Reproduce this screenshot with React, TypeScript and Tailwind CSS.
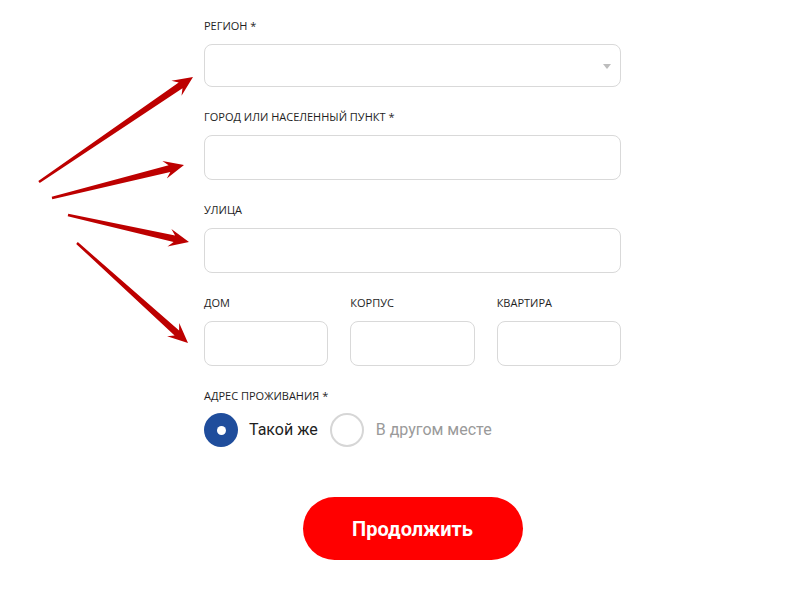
import React from "react";

type Pt = [number, number];

function arrowPoints(t: Pt, p: Pt): string {
  const dx = p[0] - t[0];
  const dy = p[1] - t[1];
  const len = Math.hypot(dx, dy);
  const ux = dx / len;
  const uy = dy / len;
  const nx = -uy;
  const ny = ux;
  const headLen = 20;
  const headW = 9;
  const shaftTail = 1.2;
  const shaftHead = 3.4;
  const bx = p[0] - ux * headLen;
  const by = p[1] - uy * headLen;
  const bx2 = p[0] - ux * (headLen - 5);
  const by2 = p[1] - uy * (headLen - 5);
  const pts: Pt[] = [
    [t[0] + nx * shaftTail, t[1] + ny * shaftTail],
    [bx2 + nx * shaftHead, by2 + ny * shaftHead],
    [bx + nx * headW, by + ny * headW],
    [p[0], p[1]],
    [bx - nx * headW, by - ny * headW],
    [bx2 - nx * shaftHead, by2 - ny * shaftHead],
    [t[0] - nx * shaftTail, t[1] - ny * shaftTail],
  ];
  return pts.map((q) => `${q[0].toFixed(1)},${q[1].toFixed(1)}`).join(" ");
}

const arrows: [Pt, Pt][] = [
  [[39, 182], [193, 77]],
  [[52, 198], [184, 165]],
  [[68, 215], [189, 242]],
  [[77, 243], [188, 343]],
];

function Label({ children }: { children: React.ReactNode }) {
  return (
    <div className="text-[11px] leading-[14px] font-medium text-[#1e1e1e] uppercase">
      {children}
    </div>
  );
}

function Input() {
  return <div className="h-[45px] mt-[11px] rounded-[8px] border border-[#d9d9d9] bg-white" />;
}

export default function App() {
  return (
    <div
      className="relative w-[800px] h-[589px] bg-white overflow-hidden"
      style={{ fontFamily: '"Open Sans", "Noto Sans", sans-serif' }}
    >
      <div className="ml-[204px] w-[417px] pt-[19px] flex flex-col">
        <div>
          <Label>Регион *</Label>
          <div className="relative h-[43px] mt-[11px] rounded-[8px] border border-[#d9d9d9] bg-white">
            <div className="absolute right-[9px] top-[19px] w-0 h-0 border-l-[4px] border-r-[4px] border-t-[5px] border-l-transparent border-r-transparent border-t-[#bdbdbd]" />
          </div>
        </div>
        <div className="mt-[23px]">
          <Label>Город или населенный пункт *</Label>
          <Input />
        </div>
        <div className="mt-[23px]">
          <Label>Улица</Label>
          <Input />
        </div>
        <div className="mt-[23px] grid grid-cols-3 gap-x-[22px]">
          <div>
            <Label>Дом</Label>
            <Input />
          </div>
          <div>
            <Label>Корпус</Label>
            <Input />
          </div>
          <div>
            <Label>Квартира</Label>
            <Input />
          </div>
        </div>
        <div className="mt-[23px]">
          <Label>Адрес проживания *</Label>
          <div className="mt-[10px] flex items-center">
            <div className="w-[34px] h-[34px] rounded-full bg-[#1f4d9c] flex items-center justify-center">
              <div className="w-[9px] h-[9px] rounded-full bg-white" />
            </div>
            <span
              className="ml-[11px] text-[16px] text-[#1e1e1e]"
              style={{ fontFamily: 'Roboto, "Open Sans", sans-serif' }}
            >
              Такой же
            </span>
            <div className="ml-[12px] w-[34px] h-[34px] rounded-full border-2 border-[#d6d6d6] bg-white" />
            <span
              className="ml-[12px] text-[16px] text-[#9a9a9a]"
              style={{ fontFamily: 'Roboto, "Open Sans", sans-serif' }}
            >
              В другом месте
            </span>
          </div>
        </div>
        <div className="mt-[50px] flex justify-center">
          <button
            className="w-[220px] h-[63px] rounded-full bg-[#ff0000] text-white text-[20px] font-bold"
            style={{ fontFamily: 'Roboto, "Open Sans", sans-serif' }}
          >
            Продолжить
          </button>
        </div>
      </div>
      <svg className="absolute left-0 top-0 pointer-events-none" width="800" height="589">
        {arrows.map((a, i) => (
          <polygon key={i} points={arrowPoints(a[0], a[1])} fill="#bd0000" />
        ))}
      </svg>
    </div>
  );
}
